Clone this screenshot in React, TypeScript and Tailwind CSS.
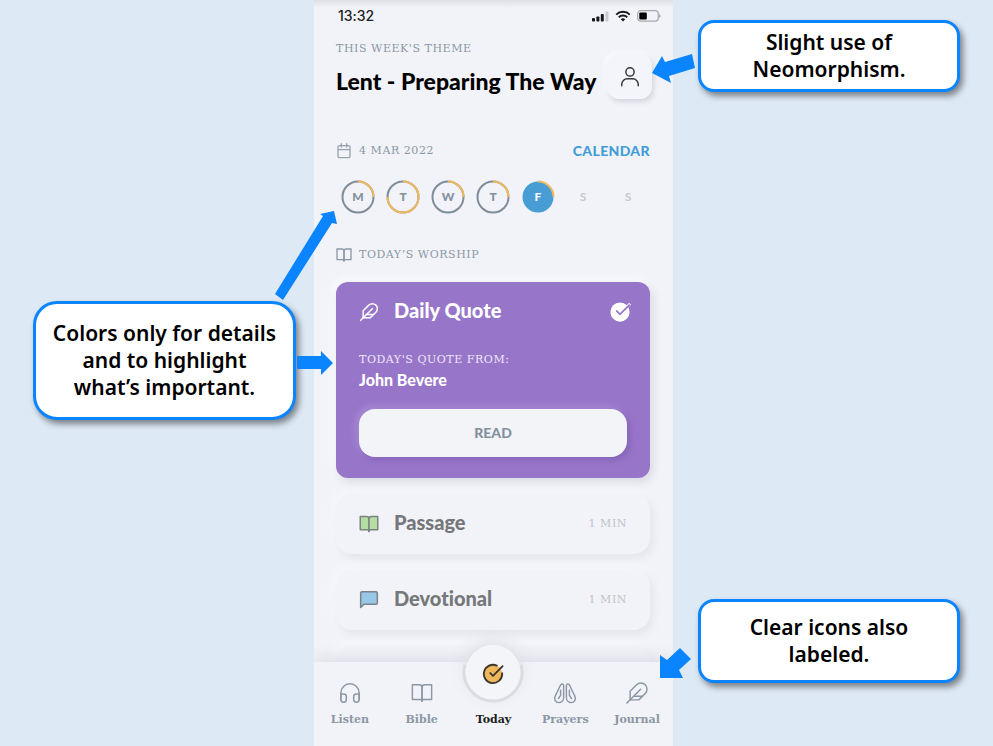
import React from "react";

type IconProps = { className?: string; children: React.ReactNode; weight?: number };

function Icon({ className = "", children, weight = 2 }: IconProps) {
  return (
    <svg
      viewBox="0 0 24 24"
      fill="none"
      stroke="currentColor"
      strokeWidth={weight}
      strokeLinecap="round"
      strokeLinejoin="round"
      className={className}
      aria-hidden="true"
    >
      {children}
    </svg>
  );
}

const bookPaths = (
  <>
    <path d="M1.5 3H9a3 3 0 0 1 3 3v15a2 2 0 0 0-2-2H1.5z" />
    <path d="M22.5 3H15a3 3 0 0 0-3 3v15a2 2 0 0 1 2-2h8.500z" />
  </>
);

const featherPaths = (
  <>
    <path d="M20.24 12.24a6 6 0 0 0-8.49-8.49L5 10.5V19h8.5z" />
    <path d="M16 8L2 22" />
    <path d="M17.5 15H9" />
  </>
);

const serif = "font-['DejaVu_Serif',serif]";
const sans = "font-[Lato,sans-serif]";

function StatusBar() {
  return (
    <div className="flex h-8 items-center justify-between bg-linear-to-b from-[#dfe0e5] via-[#f2f3f8] via-25% to-[#f2f3f8] pr-3 pl-6">
      <span className="font-[Inter,sans-serif] text-sm font-medium text-[#202126]">13:32</span>
      <div className="flex items-center gap-1.5">
        <svg viewBox="0 0 17 11" className="h-[11px] w-[17px]" aria-hidden="true">
          <rect x="0" y="7" width="3" height="3.5" rx="0.8" fill="#17181b" />
          <rect x="4.4" y="5.4" width="3" height="5.1" rx="0.8" fill="#17181b" />
          <rect x="8.8" y="3" width="3" height="7.5" rx="0.8" fill="#17181b" />
          <rect x="13.4" y="0.5" width="3" height="10" rx="0.8" fill="#c9cacf" />
        </svg>
        <svg viewBox="0 0 16 12" className="h-3 w-4" fill="none" stroke="#17181b" strokeWidth="2" aria-hidden="true">
          <path d="M1.2 4.6a9.8 9.8 0 0 1 13.6 0" />
          <path d="M3.8 7.3a6 6 0 0 1 8.4 0" />
          <path d="M8 11.6L5.8 9.3a3.1 3.1 0 0 1 4.4 0z" fill="#17181b" stroke="none" />
        </svg>
        <svg viewBox="0 0 24 12" className="h-3 w-6" aria-hidden="true">
          <rect x="0.7" y="0.7" width="20.6" height="10.4" rx="3" fill="none" stroke="#a7a8ad" strokeWidth="1.2" />
          <rect x="2.3" y="2.4" width="7.5" height="7" rx="1" fill="#000" />
          <path d="M22.4 4v4c1.3-.6 1.3-3.4 0-4z" fill="#85868a" />
        </svg>
      </div>
    </div>
  );
}

const days = [
  { letter: "M", state: "quarter" },
  { letter: "T", state: "most" },
  { letter: "W", state: "quarter" },
  { letter: "T", state: "quarter" },
  { letter: "F", state: "today" },
  { letter: "S", state: "later" },
  { letter: "S", state: "later" },
];

function Day({ letter, state }: { letter: string; state: string }) {
  const color = state === "today" ? "text-white" : state === "later" ? "text-[#c3c9d1]" : "text-[#84909d]";
  return (
    <li className={`grid size-[34px] place-items-center ${color}`}>
      <svg viewBox="0 0 34 34" className="col-start-1 row-start-1 size-[34px]" fill="none" strokeWidth="2" aria-hidden="true">
        {state === "today" && <circle cx="17" cy="17" r="15.5" fill="#479dd4" />}
        {(state === "quarter" || state === "most") && <circle cx="17" cy="17" r="15.5" stroke="#7f8c9a" />}
        {(state === "quarter" || state === "today") && <path d="M17 1.5A15.5 15.5 0 0 1 32.5 17" stroke="#efba5f" />}
        {state === "most" && <path d="M17 1.5A15.5 15.5 0 1 1 1.5 17" stroke="#efba5f" />}
      </svg>
      <span className={`col-start-1 row-start-1 text-xs leading-4 ${state === "later" ? "font-bold" : "font-black"}`}>{letter}</span>
    </li>
  );
}

const raised = "shadow-[3px_4px_8px_#e3e4ea,-3px_-3px_8px_#f7f8fc]";

function Task({ title, time, icon }: { title: string; time: string; icon: React.ReactNode }) {
  return (
    <article className={`flex h-[60px] shrink-0 items-center rounded-2xl bg-[#f2f3f8] px-[23px] ${raised}`}>
      {icon}
      <h3 className="ml-[15px] flex-1 pb-1 text-xl leading-6 font-black text-[#75777a]">{title}</h3>
      <span className={`text-[11px] tracking-wider text-[#bec4ce] ${serif}`}>{time}</span>
    </article>
  );
}

function NavItem({ label, children }: { label: string; children: React.ReactNode }) {
  return (
    <a href={`#${label.toLowerCase()}`} className="flex flex-col items-center gap-2 pt-5 text-[#8b97a5]">
      {children}
      <span className="text-[11px] leading-4 font-bold">{label}</span>
    </a>
  );
}

function Callout({ className = "", children }: { className?: string; children: React.ReactNode }) {
  return (
    <p
      className={`flex items-center justify-center border-3 border-[#0a84ff] bg-white text-center font-['Noto_Sans',sans-serif] text-[21px] leading-[27px] font-semibold whitespace-nowrap text-black shadow-[3px_4px_6px_rgba(0,0,0,0.45)] ${className}`}
    >
      <span>{children}</span>
    </p>
  );
}

export default function App() {
  return (
    <div className="grid h-screen grid-cols-[314fr_359fr_320fr] overflow-hidden bg-[#dde9f5]">
      <aside className="relative z-10 pt-[301px] pr-[18px] pl-[33px]">
        <Callout className="h-[119px] rounded-3xl">
          Colors only for details
          <br />
          and to highlight
          <br />
          what’s important.
        </Callout>
        <svg viewBox="0 0 62 90" className="absolute top-[210px] -right-[23px] h-[90px] w-[62px]" fill="#0a84ff" aria-hidden="true">
          <path d="M0 84L48 6l-3-2L59 1l3 13-5-1L8 90z" />
        </svg>
        <svg viewBox="0 0 36 24" className="absolute top-[351px] -right-[19px] h-6 w-9" fill="#0a84ff" aria-hidden="true">
          <path d="M0 5h24V0l12 12-12 12v-6H0z" />
        </svg>
      </aside>

      <main className={`flex h-full min-w-0 flex-col overflow-hidden bg-[#f2f3f8] [font-variant-ligatures:none] ${sans}`}>
        <StatusBar />
        <div className="flex min-h-0 flex-1 flex-col overflow-hidden pr-[23px] pl-[22px]">
          <header className="flex shrink-0 items-start justify-between">
            <div className="pt-[9px]">
              <p className={`text-[11px] leading-4 tracking-wider text-[#8b98a6] ${serif}`}>THIS WEEK'S THEME</p>
              <h1 className="mt-2 text-[23px] leading-8 font-black whitespace-nowrap text-black">Lent - Preparing The Way</h1>
            </div>
            <button
              type="button"
              aria-label="Profile"
              className="mt-[22px] -mr-0.5 grid size-[45px] shrink-0 place-items-center rounded-xl bg-[#f4f5fa] text-[#36373a] shadow-[2px_3px_5px_#d5d6de,-2px_-2px_4px_#fafbfe]"
            >
              <Icon className="size-[22px]" weight={1.6}>
                <circle cx="12" cy="6.5" r="4.5" />
                <path d="M3 21.500v-1.500a6 6 0 0 1 6-6h6a6 6 0 0 1 6 6v1.500" />
              </Icon>
            </button>
          </header>

          <div className="mt-11 flex h-4 shrink-0 items-center">
            <Icon className="size-4 text-[#98a3af]">
              <rect x="3" y="4" width="18" height="18" rx="2" />
              <path d="M16 1v5M8 1v5M3 10h18" />
            </Icon>
            <span className={`ml-[7px] flex-1 pt-px text-[11px] tracking-wider text-[#8b98a6] ${serif}`}>4 MAR 2022</span>
            <a href="#calendar" className="text-sm font-black tracking-wide text-[#429dd6]">
              CALENDAR
            </a>
          </div>

          <ol className="mt-[21px] flex shrink-0 justify-between px-[5px]">
            {days.map((d, i) => (
              <Day key={i} {...d} />
            ))}
          </ol>

          <h2 className={`mt-[33px] flex h-4 shrink-0 items-center gap-[7px] text-[11px] tracking-wider text-[#8b98a6] ${serif}`}>
            <Icon className="size-4">{bookPaths}</Icon>
            <span className="pt-px">TODAY’S WORSHIP</span>
          </h2>

          <div className="mt-[19px] flex flex-col gap-4">
            <article className="h-[196px] shrink-0 rounded-xl bg-[#9775c9] px-[23px] pt-4 text-white shadow-[3px_4px_8px_#d9dae2,-3px_-3px_8px_#fbfbfe]">
              <div className="flex h-7 items-center">
                <Icon className="size-5" weight={1.8}>
                  {featherPaths}
                </Icon>
                <h3 className="ml-[15px] flex-1 pb-1 text-xl leading-6 font-black">Daily Quote</h3>
                <svg viewBox="0 0 24 24" className="-mr-1 size-[22px]" aria-hidden="true">
                  <circle cx="12" cy="12" r="10.5" fill="#fff" />
                  <path d="M17 7l5-5 2 2-5 5z" fill="#fff" />
                  <path d="M8.5 11l3.500 3.500L22 4.500" fill="none" stroke="#9775c9" strokeWidth="2" strokeLinecap="round" />
                </svg>
              </div>
              <p className={`mt-6 text-[11px] leading-5 tracking-wider text-[#efe7fa] ${serif}`}>TODAY'S QUOTE FROM:</p>
              <p className="text-base leading-5 font-black">John Bevere</p>
              <button
                type="button"
                className="mt-[19px] h-12 w-full rounded-2xl bg-[#f2f4f8] text-sm font-black text-[#82909e] shadow-[3px_3px_6px_#8565b8,-3px_-3px_7px_#a98cd5]"
              >
                READ
              </button>
            </article>
            <Task
              title="Passage"
              time="1 MIN"
              icon={
                <Icon className="size-5 fill-[#b3dda2] text-[#7d8480]" weight={1.8}>
                  {bookPaths}
                </Icon>
              }
            />
            <Task
              title="Devotional"
              time="1 MIN"
              icon={
                <Icon className="size-5 fill-[#98c8e8] text-[#7c8288]" weight={1.8}>
                  <path d="M22 15.500a1.500 1.500 0 0 1-1.500 1.500H6l-4 4V3.500A1.500 1.500 0 0 1 3.500 2h17A1.500 1.500 0 0 1 22 3.500z" />
                </Icon>
              }
            />
            <div className={`h-[60px] shrink-0 rounded-2xl ${raised}`} />
          </div>
        </div>

        <nav className={`relative grid h-[84px] shrink-0 grid-cols-5 bg-[#f2f3f8] shadow-[0_-4px_14px_#dcdde4] ${serif}`}>
          <NavItem label="Listen">
            <Icon className="size-[22px]" weight={1.6}>
              <path d="M2 19v-7a10 10 0 0 1 20 0v7" />
              <path d="M22 19a3 3 0 0 1-6 0v-3a3 3 0 0 1 3-3h3zM2 19a3 3 0 0 0 6 0v-3a3 3 0 0 0-3-3H2z" />
            </Icon>
          </NavItem>
          <NavItem label="Bible">
            <Icon className="size-[22px]" weight={1.6}>
              {bookPaths}
            </Icon>
          </NavItem>
          <a href="#today" aria-current="page" className="flex flex-col items-center text-[#1c1d20]">
            <span className="-mt-[18px] grid size-[60px] shrink-0 place-items-center">
              <svg viewBox="0 0 60 60" className="col-start-1 row-start-1 size-[60px] overflow-visible" aria-hidden="true">
                <circle cx="30" cy="28" r="27" fill="#f3f4f7" className="drop-shadow-[0_-4px_8px_#dcdde4]" />
                <path d="M2 20.500a29 29 0 1 0 56 0z" fill="#f3f4f7" />
                <path d="M2 20.500a29 29 0 1 0 56 0" fill="none" stroke="#dbdce2" strokeWidth="3" />
                <circle cx="30" cy="28" r="27" fill="#f4f5f8" />
              </svg>
              <Icon className="col-start-1 row-start-1 size-[22px] text-[#3b352c]">
                <circle cx="12" cy="12" r="10" fill="#efb75c" stroke="none" />
                <path d="M22 11.080V12a10 10 0 1 1-5.930-9.140" />
                <path d="M22.500 3.500L12 14.010l-3-3" />
              </Icon>
            </span>
            <span className="mt-2 text-[11px] leading-4 font-bold">Today</span>
          </a>
          <NavItem label="Prayers">
            <Icon className="size-[22px]" weight={1.6}>
              <path d="M10.500 4c0-2-2.500-2.500-3.500-.5L1.500 15c-2 4 .5 7.500 3.500 7.500s5.500-2 5.500-5.500z" />
              <path d="M7.200 9v5.500L4.800 18" />
              <path d="M13.500 4c0-2 2.500-2.500 3.500-.5L22.500 15c2 4-.5 7.500-3.500 7.500s-5.500-2-5.500-5.500z" />
              <path d="M16.800 9v5.500l2.400 3.500" />
            </Icon>
          </NavItem>
          <NavItem label="Journal">
            <Icon className="size-[22px]" weight={1.6}>
              <path d="M21 12.500a6.500 6.500 0 0 0-9.500-9.500L4.500 10v9.500H14z" />
              <path d="M16 8L1 23" />
              <path d="M18 15.500H9" />
            </Icon>
          </NavItem>
        </nav>
      </main>

      <aside className="relative z-10 flex flex-col justify-between pt-5 pr-[33px] pb-[63px] pl-[25px]">
        <Callout className="h-[72px] rounded-2xl">
          Slight use of
          <br />
          Neomorphism.
        </Callout>
        <Callout className="h-[84px] rounded-2xl">
          Clear icons also
          <br />
          labeled.
        </Callout>
        <svg viewBox="0 0 43 30" className="absolute top-[53px] -left-[21px] h-[30px] w-[43px]" fill="#0a84ff" aria-hidden="true">
          <path d="M0 20L10 3l3 6 27-8 3 14-26 8 2 7z" />
        </svg>
        <svg viewBox="0 0 31 30" className="absolute bottom-[68px] -left-[13px] h-[30px] w-[31px]" fill="#0a84ff" aria-hidden="true">
          <path d="M0 30V7l7 5L20 0l11 11-12 11 4 8z" />
        </svg>
      </aside>
    </div>
  );
}
